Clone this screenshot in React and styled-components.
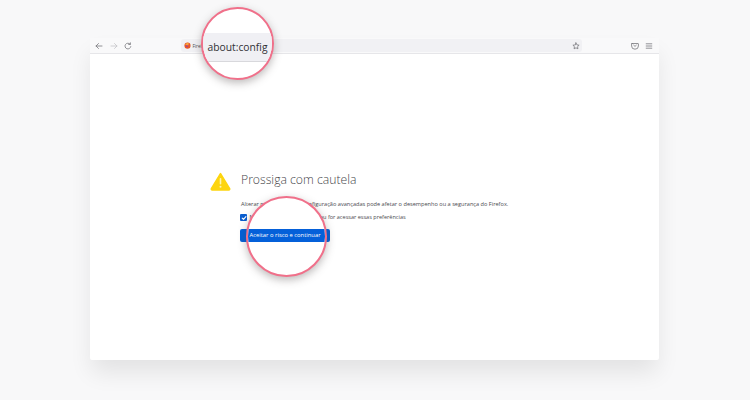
import React from "react";
import styled, { createGlobalStyle } from "styled-components";

const Global = createGlobalStyle`
  html, body { margin: 0; padding: 0; width: 750px; height: 400px; overflow: hidden; background: #f8f8f9; }
  * { box-sizing: border-box; }
`;
const Stage = styled.div`
  position: relative;
  width: 750px; height: 400px;
  padding: 38px 91px 40px 90px;
  background: #f8f8f9;
  font-family: "Open Sans", "Noto Sans", sans-serif;
  overflow: hidden;
`;
const Browser = styled.div`
  height: 322px;
  display: flex; flex-direction: column;
  background: #fff;
  border-radius: 2px;
  box-shadow: 0 14px 22px -2px rgba(0,0,0,.09);
`;
const Toolbar = styled.div`
  height: 16px; flex: none;
  display: flex; align-items: center;
  padding: 0 6px 0 5px;
  background: #f9f9fa;
  border-bottom: 1px solid #e6e6e9;
`;
const NavGroup = styled.div`
  display: flex; gap: 6.5px; align-items: center; width: 86px; flex: none;
`;
const UrlBar = styled.div`
  width: 401px; height: 13px; flex: none;
  display: flex; align-items: center; justify-content: space-between;
  padding: 0 2.5px;
  background: #f1f1f4;
  border-radius: 3px;
`;
const Identity = styled.div`
  display: flex; align-items: center; gap: 2px;
  font-size: 4.6px; color: #4a4a4f;
`;
const ToolEnd = styled.div`
  margin-left: auto;
  display: flex; align-items: center; gap: 6px;
`;
const Content = styled.main`
  flex: 1;
  display: flex; justify-content: flex-start;
  padding: 116px 0 0 120px;
`;
const IconCol = styled.div`
  width: 30px; flex: none; padding-top: 1px;
`;
const Body = styled.div`
  width: 290px;
`;
const Title = styled.h1`
  margin: 0 0 0 1px; height: 20px;
  font-size: 12.2px; line-height: 20px; font-weight: 300; color: #46464b;
  white-space: nowrap;
`;
const Desc = styled.p`
  margin: 10px 0 0 1px; height: 9px;
  font-size: 5.62px; line-height: 9px; color: #4a4a4f; white-space: nowrap;
`;
const CheckRow = styled.label`
  display: flex; align-items: center; gap: 2.5px;
  margin-top: 4px; height: 9px;
  font-size: 5.55px; line-height: 9px; color: #4a4a4f; white-space: nowrap;
`;
const CheckBox = styled.span`
  width: 7px; height: 7px; flex: none; border-radius: 1px;
  background: #0b5ecf;
  display: flex; align-items: center; justify-content: center;
`;
const Button = styled.button`
  display: block;
  margin: 7px 0 0; padding: 0;
  width: 90px; height: 13px;
  background: #0460d9;
  border: 0; border-radius: 2px;
  color: #fff;
  font: 500 5.85px/13px "Open Sans", "Noto Sans", sans-serif;
`;
const Lens = styled.div`
  position: absolute;
  left: ${p => p.$x}px; top: ${p => p.$y}px;
  width: ${p => p.$d}px; height: ${p => p.$d}px;
  border-radius: 50%;
  background: #fff;
  border: 2.5px solid #f0708a;
  box-shadow: 0 3px 8px rgba(70,60,60,.36);
  overflow: hidden;
`;
const ZoomBar = styled.div`
  position: absolute; left: 0; right: 0; top: 23.5px; height: 29px;
  background: #f0f0f4;
  border-bottom: 1px solid #d8d8dc;
  display: flex; align-items: center;
  padding-left: 4.5px;
  font-size: 10.3px; color: #303035;
`;
const ZoomButton = styled.div`
  position: absolute; left: 0; right: 0; top: 30.5px; height: 13px;
  background: #0460d9;
  display: flex; align-items: center;
  padding-left: 1.5px;
  color: #fff;
  font-size: 5.85px; font-weight: 500;
  white-space: nowrap;
`;

const stroke = { fill: "none", stroke: "#77777c", strokeWidth: 0.8, strokeLinecap: "round", strokeLinejoin: "round" };

const Back = () => (<svg width="8" height="8" viewBox="0 0 8 8" {...stroke}><path d="M7 4H1M3.5 1.5 1 4l2.5 2.5" /></svg>);
const Forward = () => (<svg width="8" height="8" viewBox="0 0 8 8" {...stroke} stroke="#c4c4c8"><path d="M1 4h6M4.5 1.5 7 4 4.5 6.5" /></svg>);
const Reload = () => (<svg width="8" height="8" viewBox="0 0 8 8" {...stroke}><path d="M6.8 4.6A2.9 2.9 0 1 1 6 2M6.4.8v1.7H4.7" /></svg>);
const Star = () => (<svg width="8" height="8" viewBox="0 0 8 8" {...stroke}><path d="M4 .9l.95 2 2.15.3-1.55 1.5.37 2.1L4 5.8l-1.92 1 .37-2.1L.9 3.2l2.15-.3z" /></svg>);
const Pocket = () => (<svg width="8" height="8" viewBox="0 0 8 8" {...stroke}><path d="M1 1.5h6a.4.4 0 0 1 .4.4V4a3.4 3.2 0 0 1-6.8 0V1.9a.4.4 0 0 1 .4-.4z" /><path d="M2.7 3.2 4 4.4l1.3-1.2" /></svg>);
const Menu = () => (<svg width="8" height="8" viewBox="0 0 8 8" {...stroke}><path d="M1.2 1.8h5.6M1.2 4h5.6M1.2 6.2h5.6" /></svg>);
const Fox = () => (<svg width="7" height="7" viewBox="0 0 8 8"><circle cx="4" cy="4.2" r="3.5" fill="#e8562a" /><path d="M1.4 3.4A3 3 0 0 1 5.5 1.2C4.8 2 5.8 3.4 4.4 4 3 4.3 2.4 3 1.4 3.4z" fill="#f9a63a" /><circle cx="3.4" cy="4.6" r="1.2" fill="#8a3fb8" opacity=".7" /></svg>);
const Warning = () => (
  <svg width="21" height="20" viewBox="0 0 21 20">
    <path d="M10.5 2.6 19.6 17.6a.9.9 0 0 1-.8 1.3H2.2a.9.9 0 0 1-.8-1.3z" fill="#fdd50f" stroke="#fdd50f" strokeWidth="1.6" strokeLinejoin="round" />
    <rect x="9.7" y="7" width="1.6" height="6.6" rx=".8" fill="#fff4b0" />
    <circle cx="10.5" cy="15.7" r="1" fill="#fff4b0" />
  </svg>
);
const Tick = () => (<svg width="6" height="6" viewBox="0 0 6 6" fill="none" stroke="#fff" strokeWidth="1.1" strokeLinecap="round" strokeLinejoin="round"><path d="M1.2 3.1 2.5 4.4 4.9 1.6" /></svg>);

export default function App() {
  return (
    <Stage>
      <Global />
      <Browser>
        <Toolbar>
          <NavGroup><Back /><Forward /><Reload /></NavGroup>
          <UrlBar>
            <Identity><Fox />Firefox</Identity>
            <Star />
          </UrlBar>
          <ToolEnd><Pocket /><Menu /></ToolEnd>
        </Toolbar>
        <Content>
          <IconCol><Warning /></IconCol>
          <Body>
            <Title>Prossiga com cautela</Title>
            <Desc>Alterar preferências de configuração avançadas pode afetar o desempenho ou a segurança do Firefox.</Desc>
            <CheckRow><CheckBox><Tick /></CheckBox>Mostrar este aviso quando eu for acessar essas preferências</CheckRow>
            <Button>Aceitar o risco e continuar</Button>
          </Body>
        </Content>
      </Browser>
      <Lens $x={201} $y={7} $d={73}>
        <ZoomBar>about:config</ZoomBar>
      </Lens>
      <Lens $x={246} $y={196} $d={81}>
        <ZoomButton>Aceitar o risco e continuar</ZoomButton>
      </Lens>
    </Stage>
  );
}
